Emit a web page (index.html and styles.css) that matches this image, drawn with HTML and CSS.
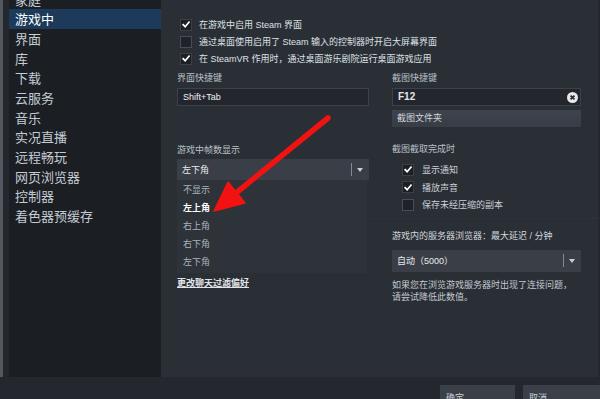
FILE: index.html
```html
<!DOCTYPE html>
<html lang="zh-CN">
<head>
<meta charset="utf-8">
<link rel="stylesheet" href="styles.css">
</head>
<body>
<div class="window">
  <div class="main">
    <div class="edge"></div>
    <nav class="sidebar">
      <ul class="nav">
        <li>家庭</li>
        <li class="active">游戏中</li>
        <li>界面</li>
        <li>库</li>
        <li>下载</li>
        <li>云服务</li>
        <li>音乐</li>
        <li>实况直播</li>
        <li>远程畅玩</li>
        <li>网页浏览器</li>
        <li>控制器</li>
        <li>着色器预缓存</li>
      </ul>
    </nav>
    <section class="panel">
      <div class="checks">
        <div class="check-row"><span class="cb on"><svg viewBox="0 0 12 12"><path d="M2.6 6.2 L5 8.6 L9.6 3.2"/></svg></span><span class="ct">在游戏中启用 Steam 界面</span></div>
        <div class="check-row"><span class="cb"></span><span class="ct">通过桌面使用启用了 Steam 输入的控制器时开启大屏幕界面</span></div>
        <div class="check-row"><span class="cb on"><svg viewBox="0 0 12 12"><path d="M2.6 6.2 L5 8.6 L9.6 3.2"/></svg></span><span class="ct">在 SteamVR 作用时，通过桌面游乐剧院运行桌面游戏应用</span></div>
      </div>
      <div class="cols">
        <div class="col col-left">
          <div class="label">界面快捷键</div>
          <div class="input">Shift+Tab</div>
          <div class="label label-fps">游戏中帧数显示</div>
          <div class="select"><span>左下角</span><span class="sep"></span><span class="caret"></span></div>
          <ul class="list">
            <li>不显示</li>
            <li class="sel">左上角</li>
            <li>右上角</li>
            <li>右下角</li>
            <li>左下角</li>
          </ul>
          <div class="link">更改聊天过滤偏好</div>
        </div>
        <div class="col col-right">
          <div class="label">截图快捷键</div>
          <div class="input input-key"><span class="key">F12</span><span class="clear"><svg viewBox="0 0 10 10"><path d="M3.2 3.2 L6.8 6.8 M6.8 3.2 L3.2 6.8"/></svg></span></div>
          <div class="folder">截图文件夹</div>
          <div class="label label-shot">截图截取完成时</div>
          <div class="sub-checks">
            <div class="check-row sub"><span class="cb on"><svg viewBox="0 0 12 12"><path d="M2.6 6.2 L5 8.6 L9.6 3.2"/></svg></span><span class="ct">显示通知</span></div>
            <div class="check-row sub"><span class="cb on"><svg viewBox="0 0 12 12"><path d="M2.6 6.2 L5 8.6 L9.6 3.2"/></svg></span><span class="ct">播放声音</span></div>
            <div class="check-row sub"><span class="cb"></span><span class="ct">保存未经压缩的副本</span></div>
          </div>
          <div class="divider"></div>
          <div class="label label-server">游戏内的服务器浏览器：最大延迟 / 分钟</div>
          <div class="select select-server"><span>自动（5000）</span><span class="sep"></span><span class="caret"></span></div>
          <p class="help">如果您在浏览游戏服务器时出现了连接问题，<br>请尝试降低此数值。</p>
        </div>
      </div>
      <svg class="arrow" viewBox="161 0 439 377" width="439" height="377">
        <line x1="328" y1="118" x2="236" y2="193"/>
        <polygon points="214,211 245,203 228,182"/>
      </svg>
    </section>
  </div>
  <footer class="bottom">
    <button class="btn btn-ok">确定</button>
    <button class="btn btn-cancel">取消</button>
  </footer>
</div>
</body>
</html>
```

FILE: styles.css
```css
* { box-sizing: border-box; margin: 0; padding: 0; }
html, body { width: 600px; height: 399px; overflow: hidden; }
body {
  background: #24272d;
  font-family: "Liberation Sans", "Noto Sans CJK SC", sans-serif;
  color: #dfe3e6;
}
.window { display: flex; flex-direction: column; height: 399px; }
.main { display: flex; height: 377px; }
.edge { width: 3px; background: #53575e; margin-right: 6px; }
.sidebar { width: 152px; background: #1b1e23; overflow: hidden; }
.nav { list-style: none; margin-top: -10.5px; }
.nav li {
  height: 19.7px; line-height: 19.7px; padding-left: 6px;
  font-size: 13px; color: #c3ccd5;
  font-family: "Noto Sans CJK SC", sans-serif;
}
.nav li.active { background: #1d3a5b; color: #ffffff; }

.panel {
  flex: 1; background: #2a2e35; position: relative;
  padding: 16px 0 0 16px; margin-right: 2px;
  font-size: 9px;
}
.check-row { height: 17px; display: flex; align-items: center; }
.cb {
  width: 12px; height: 12px; margin-left: 3px;
  background: #1f2227; border: 1px solid #474c56;
  display: flex; align-items: center; justify-content: center;
}
.cb.on { background: #1c1f24; border-color: #3a3f48; }
.cb svg { width: 11px; height: 11px; }
.cb path { fill: none; stroke: #ffffff; stroke-width: 2; stroke-linecap: square; }
.ct { margin-left: 7px; color: #dde2e7; white-space: nowrap; }

.cols { display: flex; gap: 23px; margin-top: 5px; }
.col { display: flex; flex-direction: column; }
.col-left { width: 192px; }
.col-right { width: 189px; }
.label { line-height: 12px; color: #b8c0c8; white-space: nowrap; }
.input {
  margin-top: 4px; height: 18px; background: #23262c;
  border: 1px solid #3c414b; padding-left: 5px;
  line-height: 16px; color: #f0f2f4;
}
.input-key { display: flex; align-items: center; padding-right: 2px; }
.key { font-size: 10px; font-weight: bold; color: #e4e7ea; }
.clear {
  margin-left: auto; width: 11px; height: 11px; border-radius: 50%;
  background: #e6e8ea; display: flex;
}
.clear svg { width: 11px; height: 11px; }
.clear path { stroke: #2a2e35; stroke-width: 1.6; fill: none; }
.label-fps { margin-top: 38px; }
.select {
  margin-top: 3px; height: 21px; background: #3a3e47;
  display: flex; align-items: center; padding-left: 5px; color: #e8ebee;
}
.sep { width: 1px; height: 13px; background: #858b94; margin-left: auto; }
.caret {
  width: 0; height: 0; margin: 0 6px 0 5px;
  border-left: 3.5px solid transparent; border-right: 3.5px solid transparent;
  border-top: 4px solid #c9ced4;
}
.list { list-style: none; background: #2e3239; padding: 1px 0 2px; width: 190px; }
.list li { height: 18px; line-height: 18px; padding-left: 6px; color: #a9b2bb; }
.list li.sel { color: #ffffff; font-weight: bold; }
.link {
  margin-top: 4px; line-height: 12px; color: #e1e5e9;
  text-decoration: underline; font-weight: bold;
}
.folder {
  margin-top: 4px; height: 17px; line-height: 17px; padding-left: 5px;
  background: linear-gradient(#3e434d, #383c45); color: #d0d6dc;
}
.label-shot { margin-top: 16px; }
.sub-checks { margin-top: 6px; }
.check-row.sub { height: 17.5px; padding-left: 7px; }
.check-row.sub .ct { margin-left: 8px; color: #c9d0d6; }
.divider { margin: 4.5px -20px 0 -24px; height: 1px; background: #2d3138; }
.label-server { margin-top: 10.5px; color: #d2d8dd; }
.select-server { margin-top: 8px; height: 22px; }
.help { margin-top: 7px; line-height: 12px; color: #c3cad1; white-space: nowrap; }

.arrow { position: absolute; left: 0; top: 0; }
.arrow line { stroke: #f31212; stroke-width: 5.5; stroke-linecap: round; }
.arrow polygon { fill: #f31212; stroke: #f31212; stroke-width: 1.5; stroke-linejoin: round; }

.bottom {
  height: 22px; display: flex; justify-content: flex-end; gap: 8px;
  padding-top: 8px; overflow: hidden;
}
.btn {
  width: 76px; height: 24px; border: none; background: #3b3f48;
  color: #c8cfd6; font-size: 9px; text-align: left; padding-left: 6px;
  font-family: "Noto Sans CJK SC", sans-serif; flex-shrink: 0;
}
.btn-ok { width: 75px; }
.btn-cancel { width: 77px; }
```
